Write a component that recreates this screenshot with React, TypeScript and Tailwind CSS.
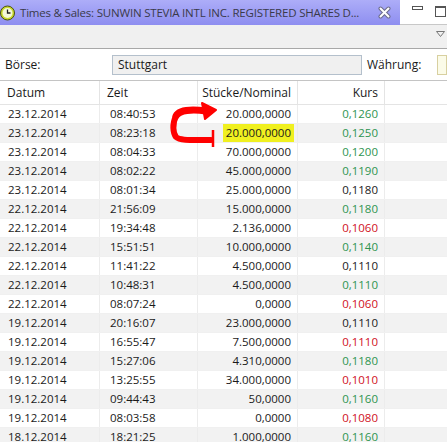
import React from 'react';

type Trade = { d: string; t: string; n: string; k: string; c: 'g' | 'r' | 'b' };

const trades: Trade[] = [
  { d: '23.12.2014', t: '08:40:53', n: '20.000,0000', k: '0,1260', c: 'g' },
  { d: '23.12.2014', t: '08:23:18', n: '20.000,0000', k: '0,1250', c: 'g' },
  { d: '23.12.2014', t: '08:04:33', n: '70.000,0000', k: '0,1200', c: 'g' },
  { d: '23.12.2014', t: '08:02:22', n: '45.000,0000', k: '0,1190', c: 'g' },
  { d: '23.12.2014', t: '08:01:34', n: '25.000,0000', k: '0,1180', c: 'b' },
  { d: '22.12.2014', t: '21:56:09', n: '15.000,0000', k: '0,1180', c: 'g' },
  { d: '22.12.2014', t: '19:34:48', n: '2.136,0000', k: '0,1060', c: 'r' },
  { d: '22.12.2014', t: '15:51:51', n: '10.000,0000', k: '0,1140', c: 'g' },
  { d: '22.12.2014', t: '11:41:22', n: '4.500,0000', k: '0,1110', c: 'b' },
  { d: '22.12.2014', t: '10:48:31', n: '4.500,0000', k: '0,1110', c: 'g' },
  { d: '22.12.2014', t: '08:07:24', n: '0,0000', k: '0,1060', c: 'r' },
  { d: '19.12.2014', t: '20:16:07', n: '23.000,0000', k: '0,1110', c: 'b' },
  { d: '19.12.2014', t: '16:55:47', n: '7.500,0000', k: '0,1110', c: 'r' },
  { d: '19.12.2014', t: '15:27:06', n: '4.310,0000', k: '0,1180', c: 'g' },
  { d: '19.12.2014', t: '13:25:55', n: '34.000,0000', k: '0,1010', c: 'r' },
  { d: '19.12.2014', t: '09:44:43', n: '50,0000', k: '0,1160', c: 'g' },
  { d: '19.12.2014', t: '08:03:58', n: '0,0000', k: '0,1080', c: 'r' },
  { d: '18.12.2014', t: '18:21:25', n: '1.000,0000', k: '0,1160', c: 'g' },
];

const kursColor = { g: 'text-[#2e9450]', r: 'text-[#d0101c]', b: 'text-[#1a1a1a]' };

function ClockIcon() {
  return (
    <svg width="16" height="16" viewBox="0 0 16 16" className="shrink-0">
      <circle cx="7.5" cy="8" r="7" fill="#c8d830" stroke="#4a5010" strokeWidth="1" />
      <circle cx="7.5" cy="8" r="5" fill="#f4f8d8" />
      <path d="M7.5 4.5 V8 H10.5" stroke="#202020" strokeWidth="1.3" fill="none" />
    </svg>
  );
}

function CloseIcon() {
  return (
    <svg width="13" height="13" viewBox="0 0 13 13">
      <path d="M2.5 2.5 L10.5 10.5 M10.5 2.5 L2.5 10.5" stroke="#6a6a8a" strokeWidth="4" strokeLinecap="round" />
      <path d="M2.5 2.5 L10.5 10.5 M10.5 2.5 L2.5 10.5" stroke="#ffffff" strokeWidth="2" strokeLinecap="round" />
    </svg>
  );
}

function RedArrow() {
  return (
    <svg width="60" height="50" viewBox="0 0 60 50" className="absolute left-[164px] top-[101px]">
      <path
        d="M12 15 C15 9 28 8 42 10"
        stroke="#ff0000"
        strokeWidth="7"
        fill="none"
        strokeLinecap="round"
      />
      <path d="M38 2 L52 9 L41 18 Z" fill="#ff0000" strokeLinejoin="round" stroke="#ff0000" strokeWidth="2" />
      <path
        d="M12 15 C8 23 9 32 12 36 C16 40 30 39 47 39"
        stroke="#ff0000"
        strokeWidth="6"
        fill="none"
        strokeLinecap="round"
      />
      <path d="M49 29 V46" stroke="#ff0000" strokeWidth="2.5" />
    </svg>
  );
}

export default function App() {
  return (
    <div className="w-[447px] h-[442px] overflow-hidden bg-white font-['Open_Sans',sans-serif] text-[#1a1a1a] relative">
      {/* Tab bar */}
      <div className="flex h-[25px]">
        <div className="w-[400px] flex items-center bg-gradient-to-b from-[#adadf8] to-[#8e8ef0] pr-[9px]">
          <ClockIcon />
          <span className="ml-[4px] text-[11.5px] tracking-[-0.2px] text-[#3a3a4a] whitespace-nowrap">
            Times &amp; Sales: SUNWIN STEVIA INTL INC. REGISTERED SHARES D...
          </span>
          <span className="ml-auto flex items-center">
            <CloseIcon />
          </span>
        </div>
        <div className="flex-1 bg-white border-b border-[#c8c8c8] flex items-start pt-[6px] gap-[12px] pl-[12px]">
          <div className="w-[11px] h-[4px] border border-[#555]" />
          <div className="w-[11px] h-[11px] border border-[#555] border-t-2" />
        </div>
      </div>

      {/* Toolbar */}
      <div className="h-[24px] bg-[#f0f0f0] border-b border-[#a8a8a8] flex justify-end items-start pr-[2px]">
        <svg width="9" height="6" viewBox="0 0 9 6" className="mt-[6px]">
          <path d="M0.5 0.5 H8.5 L4.5 5.5 Z" fill="none" stroke="#777" strokeWidth="1" />
        </svg>
      </div>

      {/* Exchange row */}
      <div className="h-[32px] flex items-center border-b border-[#c4c4c4] text-[12px]">
        <span className="w-[112px] pl-[5px]">Börse:</span>
        <div className="w-[250px] h-[20px] bg-[#f0f0f0] border border-[#b4c0cc] flex items-center pl-[5px]">
          Stuttgart
        </div>
        <span className="ml-[5px] w-[70px]">Währung:</span>
        <div className="flex-1 h-[20px] border border-[#d8d0a0] bg-[#fbfbe8]" />
      </div>

      {/* Table header */}
      <div className="grid grid-cols-[100px_98px_100px_87px_1fr] h-[24px] text-[12px] border-b border-[#e4e4e4]">
        <div className="pl-[7px] flex items-center border-r border-[#e4e4e4]">Datum</div>
        <div className="pl-[7px] flex items-center border-r border-[#e4e4e4]">Zeit</div>
        <div className="pr-[6px] flex items-center justify-end border-r border-[#e4e4e4]">Stücke/Nominal</div>
        <div className="pr-[6px] flex items-center justify-end border-r border-[#e4e4e4]">Kurs</div>
        <div />
      </div>

      {/* Rows */}
      <div className="text-[11.5px]">
        {trades.map((r, i) => (
          <div
            key={i}
            className={`grid grid-cols-[100px_98px_100px_87px_1fr] h-[19px] border-b border-[#f0f0f0] ${
              i % 2 === 1 ? 'bg-[#f2f2f2]' : 'bg-white'
            }`}
          >
            <div className="pl-[8px] flex items-center border-r border-[#ececec]">{r.d}</div>
            <div className="pl-[10px] flex items-center border-r border-[#ececec]">{r.t}</div>
            <div className="pr-[6px] flex items-center justify-end border-r border-[#ececec]">
              {i === 1 ? <span className="bg-[#f0f020] px-[3px] mr-[-3px]">{r.n}</span> : r.n}
            </div>
            <div className={`pr-[6px] flex items-center justify-end border-r border-[#ececec] ${kursColor[r.c]}`}>
              {r.k}
            </div>
            <div />
          </div>
        ))}
      </div>

      <RedArrow />
    </div>
  );
}
